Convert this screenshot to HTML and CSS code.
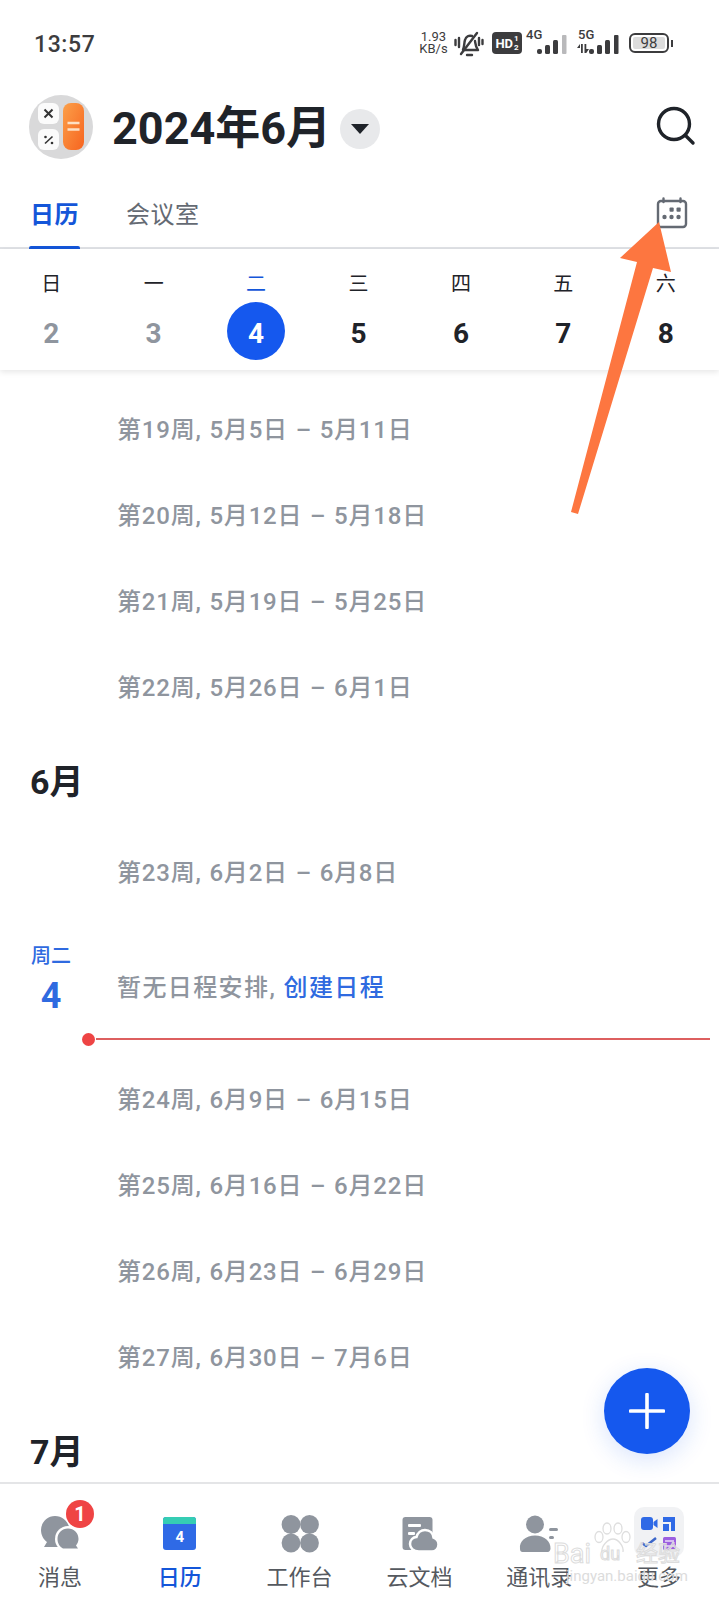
FILE: index.html
```html
<!DOCTYPE html>
<html lang="zh-CN">
<head>
    <meta charset="UTF-8">
    <meta name="viewport" content="width=device-width, initial-scale=1.0">
    <title>日历</title>
    <link rel="stylesheet" href="styles.css">
</head>
<body>
<div class="screen">

    <div class="status-bar">
        <span class="time">13:57</span>
        <div class="status-icons">
            <span class="speed">1.93<br>KB/s</span>
            <svg class="ic-bell" width="30" height="27" viewBox="0 0 30 27" fill="none" stroke="#3c3c3e" stroke-width="2.4" stroke-linecap="round" stroke-linejoin="round">
                <path d="M9 19.500 C10.500 17 10 13 11 10 C12 6.500 15 5 18 6 M21 11 C21.500 14 21.500 17 24 20 L9 20"/>
                <path d="M7 24 L23 3"/>
                <path d="M13 25 L18 25"/>
                <path d="M1.500 10 V15 M5 8 V17 M25 8 V15 M28.500 10 V14"/>
            </svg>
            <span class="hd">HD<span class="hd-sub">1<br>2</span></span>
            <div class="signal">
                <span class="signal-tag">4G</span>
                <svg width="32" height="20" viewBox="0 0 32 20" fill="#3c3c3e">
                    <rect x="1" y="14" width="5" height="5" rx="2"/>
                    <rect x="9" y="10" width="5" height="9" rx="1.500"/>
                    <rect x="17" y="5" width="5" height="14" rx="1.500"/>
                    <rect x="26" y="0" width="4.500" height="19" rx="1" fill="#b9b9bb"/>
                </svg>
            </div>
            <div class="signal signal-5g">
                <span class="signal-tag">5G</span>
                <svg width="44" height="20" viewBox="0 0 44 20" fill="#3c3c3e">
                    <path d="M4 13 L1 13 L4 9 Z M5 9 H6.800 V18 H5 Z M8.500 9 H10.300 V18 H8.500 Z M10.300 14 H13 L10.300 18 Z"/>
                    <rect x="13" y="14" width="5" height="5" rx="2"/>
                    <rect x="21" y="10" width="5" height="9" rx="1.500"/>
                    <rect x="29" y="5" width="5" height="14" rx="1.500"/>
                    <rect x="38" y="0" width="4.500" height="19" rx="1"/>
                </svg>
            </div>
            <div class="battery">
                <span class="battery-body"><span class="battery-level">98</span></span>
                <span class="battery-nub"></span>
            </div>
        </div>
    </div>

    <header class="top-bar">
        <svg class="avatar" width="64" height="64" viewBox="0 0 64 64">
            <defs>
                <linearGradient id="orange" x1="0" y1="0" x2="1" y2="1">
                    <stop offset="0" stop-color="#fba04a"/>
                    <stop offset="1" stop-color="#f7641f"/>
                </linearGradient>
            </defs>
            <circle cx="32" cy="32" r="32" fill="#d9d9da"/>
            <rect x="9" y="8" width="21" height="21" rx="6" fill="#fbfbfb"/>
            <rect x="9" y="34" width="21" height="21" rx="6" fill="#fbfbfb"/>
            <rect x="34" y="8" width="21" height="47" rx="8" fill="url(#orange)"/>
            <path d="M15.500 14.500 L23.500 22.500 M23.500 14.500 L15.500 22.500" stroke="#333" stroke-width="2"/>
            <path d="M16 48.500 L23.500 41.500" stroke="#333" stroke-width="1.600"/>
            <circle cx="16.500" cy="42" r="1.300" fill="#333"/>
            <circle cx="23" cy="48" r="1.300" fill="#333"/>
            <path d="M38.500 28 H50.500 M38.500 34.500 H50.500" stroke="#fde0c4" stroke-width="2.600"/>
        </svg>
        <h1 class="title">2024年6月</h1>
        <span class="caret-btn"><span class="caret"></span></span>
        <svg class="search" width="40" height="40" viewBox="0 0 40 40" fill="none" stroke="#1f2329" stroke-width="3.400" stroke-linecap="round">
            <circle cx="18" cy="18" r="15.500"/>
            <path d="M29.500 29.500 L37 37"/>
        </svg>
    </header>

    <nav class="tabs">
        <a class="tab tab-active">日历</a>
        <a class="tab">会议室</a>
        <svg class="tab-cal" width="32" height="32" viewBox="0 0 32 32">
            <rect x="2" y="4" width="28" height="26" rx="3" fill="none" stroke="#646a73" stroke-width="2.400"/>
            <path d="M7.500 1.500 V5 M24.500 1.500 V5" stroke="#646a73" stroke-width="2.400" stroke-linecap="round"/>
            <g fill="#646a73">
                <rect x="13.500" y="10.500" width="4.200" height="4.200" rx="1"/>
                <rect x="20.500" y="10.500" width="4.200" height="4.200" rx="1"/>
                <circle cx="8.500" cy="20" r="2.200"/>
                <circle cx="15.500" cy="20" r="2.200"/>
                <circle cx="22.500" cy="20" r="2.200"/>
            </g>
        </svg>
    </nav>

    <div class="week">
        <div class="day day-past"><span class="day-name">日</span><span class="day-num">2</span></div>
        <div class="day day-past"><span class="day-name">一</span><span class="day-num">3</span></div>
        <div class="day day-today"><span class="day-name">二</span><span class="day-num">4</span></div>
        <div class="day"><span class="day-name">三</span><span class="day-num">5</span></div>
        <div class="day"><span class="day-name">四</span><span class="day-num">6</span></div>
        <div class="day"><span class="day-name">五</span><span class="day-num">7</span></div>
        <div class="day"><span class="day-name">六</span><span class="day-num">8</span></div>
    </div>

    <main class="agenda">
        <div class="week-row">第19周, 5月5日 – 5月11日</div>
        <div class="week-row">第20周, 5月12日 – 5月18日</div>
        <div class="week-row">第21周, 5月19日 – 5月25日</div>
        <div class="week-row">第22周, 5月26日 – 6月1日</div>
        <h2 class="month">6月</h2>
        <div class="week-row">第23周, 6月2日 – 6月8日</div>
        <div class="today-row">
            <div class="today-date">
                <span class="today-name">周二</span>
                <span class="today-num">4</span>
            </div>
            <p class="today-text">暂无日程安排, <a class="create-link">创建日程</a></p>
        </div>
        <div class="now-line"><span class="now-dot"></span><span class="now-rule"></span></div>
        <div class="week-row">第24周, 6月9日 – 6月15日</div>
        <div class="week-row">第25周, 6月16日 – 6月22日</div>
        <div class="week-row">第26周, 6月23日 – 6月29日</div>
        <div class="week-row">第27周, 6月30日 – 7月6日</div>
        <h2 class="month">7月</h2>
    </main>

    <footer class="tabbar">
        <div class="tabbar-item">
            <svg class="tabbar-icon" width="60" height="56" viewBox="0 0 60 56">
                <path d="M25 10 C16.500 10 11 17 11 24 C11 29 13.500 33.500 17 36 L14 41 H30 C36 39 39.500 32 39.500 24 C39.500 17 33.500 10 25 10 Z" fill="#8f959e"/>
                <circle cx="38" cy="33" r="13" fill="#fff"/>
                <path d="M38 22.500 C32 22.500 27.500 27 27.500 33 C27.500 37.500 30 41 33 42.500 H48 L46 39.500 C47.500 37.500 48.500 35.500 48.500 33 C48.500 27 44 22.500 38 22.500 Z" fill="#8f959e"/>
            </svg>
            <span class="badge">1</span>
            <span class="tabbar-label">消息</span>
        </div>
        <div class="tabbar-item tabbar-active">
            <div class="cal-icon"><span class="cal-top"></span><span class="cal-num">4</span></div>
            <span class="tabbar-label">日历</span>
        </div>
        <div class="tabbar-item">
            <svg class="tabbar-icon" width="60" height="56" viewBox="0 0 60 56" fill="#8f959e">
                <circle cx="21" cy="18.500" r="9.400"/>
                <circle cx="39.500" cy="18.500" r="9.400"/>
                <circle cx="21" cy="37" r="9.400"/>
                <circle cx="39.500" cy="37" r="9.400"/>
            </svg>
            <span class="tabbar-label">工作台</span>
        </div>
        <div class="tabbar-item">
            <svg class="tabbar-icon" width="60" height="56" viewBox="0 0 60 56">
                <rect x="13.500" y="11" width="30" height="33" rx="3" fill="#8f959e"/>
                <rect x="19" y="18" width="13" height="3" rx="1" fill="#fff"/>
                <rect x="19" y="26" width="7" height="3" rx="1" fill="#fff"/>
                <path d="M30 45.500 C24 45.500 21 41.500 21 38 C21 34 24 31 27.500 31 C28.500 27 32 24 36 24 C41 24 44 27.500 44.500 31.500 C47.500 32.500 49.500 35 49.500 38.500 C49.500 42.500 46.500 45.500 43 45.500 Z" fill="#8f959e" stroke="#fff" stroke-width="2.500"/>
            </svg>
            <span class="tabbar-label">云文档</span>
        </div>
        <div class="tabbar-item">
            <svg class="tabbar-icon" width="60" height="56" viewBox="0 0 60 56" fill="#8f959e">
                <circle cx="26" cy="18.500" r="9"/>
                <path d="M11 43 C10 35 17 29.500 26 29.500 C35 29.500 42 35 41.500 43 C41 45 40 46 39 46 H13.500 C12 46 11 45 11 43 Z"/>
                <rect x="40" y="22" width="9" height="3" rx="1.500"/>
                <rect x="40" y="30" width="5" height="3" rx="1.500"/>
            </svg>
            <span class="tabbar-label">通讯录</span>
        </div>
        <div class="tabbar-item">
            <div class="more-icon">
                <svg width="50" height="50" viewBox="0 0 50 50">
                    <rect x="7" y="10" width="12" height="13" rx="3" fill="#2f6ae6"/>
                    <path d="M19.500 15 L23.500 12 V21 L19.500 18 Z" fill="#2f6ae6"/>
                    <path d="M29 10 H41 V24 H37 V15 H29 Z M29 17 H35 V24 H29 Z" fill="#2f6ae6"/>
                    <path d="M8 36 L12 39 L22 31" fill="none" stroke="#3b66c9" stroke-width="2.500"/>
                    <rect x="29" y="30" width="13" height="13" rx="1.500" fill="#9b5fe0"/>
                    <path d="M31 34 H40 M31 39 H40" stroke="#eadcf7" stroke-width="1.600"/>
                </svg>
            </div>
            <span class="tabbar-label">更多</span>
        </div>
    </footer>

    <button class="fab" aria-label="新建">
        <svg width="36" height="36" viewBox="0 0 36 36" stroke="#fff" stroke-width="3.600" stroke-linecap="round">
            <path d="M18 1.500 V34.500 M1.500 18 H34.500"/>
        </svg>
    </button>

    <svg class="arrow" width="719" height="1600" viewBox="0 0 719 1600">
        <polygon points="571,512 578,514 653,268 671,272 659,222 620,258 637,262" fill="#fd7640"/>
    </svg>

    <div class="watermark">
        <svg class="paw" width="40" height="32" viewBox="0 0 40 32" fill="none" stroke="#dedede" stroke-width="1.300">
            <ellipse cx="6" cy="15" rx="4" ry="5.500"/>
            <ellipse cx="14" cy="6.500" rx="4" ry="5.500"/>
            <ellipse cx="25" cy="6.500" rx="4" ry="5.500"/>
            <ellipse cx="33" cy="15" rx="4" ry="5.500"/>
            <path d="M9 30 C8 24 15 17 20 17 C25 17 31 24 30 30"/>
        </svg>
        <div class="wm-logo">
            <span class="wm-bai">Bai</span>
            <span class="wm-du">du</span>
            <span class="wm-cn">经验</span>
        </div>
        <span class="wm-url">jingyan.baidu.com</span>
    </div>

</div>
</body>
</html>
```

FILE: styles.css
```css
* {
    box-sizing: border-box;
}

html, body {
    margin: 0;
    padding: 0;
}

body {
    font-family: Roboto, "Noto Sans CJK SC", sans-serif;
    background-color: #fff;
    color: #1f2329;
}

.screen {
    position: relative;
    width: 719px;
    height: 1600px;
    display: flex;
    flex-direction: column;
    overflow: hidden;
    background-color: #fff;
}

/* status bar */

.status-bar {
    height: 87px;
    flex: none;
    display: flex;
    justify-content: space-between;
    align-items: center;
    padding: 0 46px 0 34px;
    color: #3c3c3e;
}

.time {
    font-size: 23px;
    font-weight: 500;
    letter-spacing: 0.6px;
    margin-top: 1px;
}

.status-icons {
    display: flex;
    align-items: center;
    margin-bottom: 1px;
}

.speed {
    font-size: 13px;
    line-height: 12px;
    text-align: center;
    width: 29px;
}

.ic-bell {
    margin-left: 6px;
}

.hd {
    margin-left: 8px;
    width: 30px;
    height: 22px;
    border-radius: 4px;
    background-color: #3c3c3e;
    color: #fff;
    display: flex;
    align-items: center;
    justify-content: center;
    font-size: 13px;
    font-weight: 700;
}

.hd-sub {
    font-size: 8px;
    line-height: 9px;
    margin-left: 1px;
}

.signal {
    position: relative;
    margin-left: 4px;
    padding-top: 3px;
    width: 42px;
    display: flex;
    justify-content: flex-end;
}

.signal-5g {
    margin-left: 8px;
    width: 44px;
}

.signal-tag {
    position: absolute;
    left: 0;
    top: -4px;
    font-size: 13px;
    line-height: 14px;
    font-weight: 500;
}

.signal-5g .signal-tag {
    left: 2px;
}

.battery {
    margin-left: 9px;
    display: flex;
    align-items: center;
}

.battery-body {
    width: 40px;
    height: 20px;
    border: 2px solid #3c3c3e;
    border-radius: 6px;
    padding: 2px;
    display: block;
}

.battery-level {
    display: block;
    height: 12px;
    background-color: #dcdcdc;
    border-radius: 2px;
    font-size: 15px;
    line-height: 12px;
    text-align: center;
}

.battery-nub {
    width: 2px;
    height: 7px;
    margin-left: 2px;
    background-color: #3c3c3e;
}

/* header */

.top-bar {
    height: 80px;
    flex: none;
    position: relative;
    display: flex;
    align-items: center;
    padding-left: 29px;
}

.title {
    margin: 4px 0 0 19px;
    font-size: 45px;
    font-weight: 700;
    line-height: 60px;
}

.caret-btn {
    width: 40px;
    height: 40px;
    margin: 3px 0 0 9px;
    border-radius: 50%;
    background-color: #e8e9eb;
    display: flex;
    align-items: center;
    justify-content: center;
}

.caret {
    width: 0;
    height: 0;
    border-left: 9px solid transparent;
    border-right: 9px solid transparent;
    border-top: 10px solid #1f2329;
}

.search {
    position: absolute;
    right: 23px;
    top: 19px;
}

.tabs {
    height: 82px;
    flex: none;
    display: flex;
    align-items: center;
    position: relative;
    border-bottom: 2px solid #e0e2e6;
    padding-left: 30px;
}

.tab {
    font-size: 24px;
    color: #646a73;
    line-height: 34px;
    margin-right: 47px;
    letter-spacing: 0.5px;
    position: relative;
    margin-top: 15px;
}

.tab-active {
    color: #1456d9;
    font-weight: 700;
}

.tab-active::after {
    content: "";
    position: absolute;
    left: -1px;
    right: -1px;
    bottom: -18px;
    height: 4px;
    border-radius: 2px 2px 0 0;
    background-color: #1456d9;
}

.tab-cal {
    position: absolute;
    right: 31px;
    top: 30px;
}

/* week strip */

.week {
    height: 121px;
    flex: none;
    display: grid;
    grid-template-columns: repeat(7, 1fr);
    padding-right: 2px;
    background-color: #fff;
    box-shadow: 0 2px 6px rgba(0, 0, 0, 0.1);
    position: relative;
}

.day {
    display: flex;
    flex-direction: column;
    align-items: center;
}

.day-name {
    margin-top: 22px;
    font-size: 20px;
    line-height: 26px;
}

.day-num {
    margin-top: 5px;
    padding-top: 4px;
    width: 58px;
    height: 58px;
    display: flex;
    align-items: center;
    justify-content: center;
    font-size: 28px;
    font-weight: 700;
}

.day-past .day-num {
    color: #8f959e;
}

.day-today .day-name {
    color: #1456d9;
}

.day-today .day-num {
    background-color: #1558ee;
    color: #fff;
    border-radius: 50%;
}

/* agenda list */

.agenda {
    flex: 1;
    min-height: 0;
    overflow: hidden;
    padding-top: 14px;
}

.week-row {
    height: 86px;
    display: flex;
    align-items: center;
    padding-left: 117px;
    font-size: 24px;
    font-weight: 500;
    letter-spacing: 0.8px;
    word-spacing: 1px;
    color: #8f959e;
}

.month {
    margin: 0;
    height: 99px;
    padding: 32px 0 0 30px;
    font-size: 34px;
    line-height: 44px;
    font-weight: 700;
}

.today-row {
    height: 113px;
    display: flex;
    align-items: flex-start;
    padding: 31px 0 0 29px;
}

.today-date {
    width: 44px;
    display: flex;
    flex-direction: column;
    align-items: center;
    color: #2f6ae0;
}

.today-name {
    font-size: 20px;
    line-height: 24px;
    font-weight: 500;
}

.today-num {
    margin-top: 8px;
    font-size: 36px;
    line-height: 40px;
    font-weight: 700;
}

.today-text {
    margin: 27px 0 0 44px;
    font-size: 24px;
    font-weight: 500;
    line-height: 34px;
    letter-spacing: 1.4px;
    color: #8f959e;
}

.create-link {
    color: #2f6ae0;
}

.now-line {
    height: 26px;
    margin-bottom: 2px;
    display: flex;
    align-items: center;
    padding: 0 9px 0 82px;
}

.now-dot {
    width: 13px;
    height: 13px;
    border-radius: 50%;
    background-color: #ee4444;
    flex: none;
}

.now-rule {
    flex: 1;
    height: 2px;
    margin-left: 1px;
    background-color: #dd5f5f;
}

/* bottom tabs */

.tabbar {
    height: 118px;
    flex: none;
    display: grid;
    grid-template-columns: repeat(6, 1fr);
    border-top: 2px solid #e4e5e7;
    background-color: #fff;
}

.tabbar-item {
    position: relative;
    display: flex;
    flex-direction: column;
    align-items: center;
}

.tabbar-icon {
    margin-top: 22px;
}

.tabbar-label {
    position: absolute;
    top: 78px;
    font-size: 22px;
    line-height: 32px;
    color: #55595f;
}

.tabbar-active .tabbar-label {
    color: #1456d9;
    font-weight: 500;
}

.badge {
    position: absolute;
    left: 66px;
    top: 16px;
    width: 28px;
    height: 28px;
    border-radius: 50%;
    background-color: #ef4444;
    color: #fff;
    font-size: 20px;
    font-weight: 700;
    display: flex;
    align-items: center;
    justify-content: center;
}

.cal-icon {
    margin-top: 33px;
    width: 33px;
    height: 33px;
    border-radius: 3px;
    overflow: hidden;
    background-color: #2f6ae6;
    display: flex;
    flex-direction: column;
    align-items: center;
}

.cal-top {
    width: 100%;
    height: 7px;
    background-color: #35cdb4;
    flex: none;
}

.cal-num {
    color: #fff;
    font-size: 15px;
    font-weight: 700;
    line-height: 26px;
}

.more-icon {
    margin-top: 23px;
    width: 50px;
    height: 50px;
    border-radius: 10px;
    background-color: #f1f2f4;
}

.more-icon svg {
    display: block;
}

/* floating things over the page */

.fab {
    position: absolute;
    right: 29px;
    bottom: 146px;
    width: 86px;
    height: 86px;
    padding: 0;
    border: none;
    border-radius: 50%;
    background-color: #1558ee;
    box-shadow: 0 6px 24px rgba(21, 88, 238, 0.16);
    display: flex;
    align-items: center;
    justify-content: center;
}

.arrow {
    position: absolute;
    left: 0;
    top: 0;
    pointer-events: none;
}

.watermark {
    position: absolute;
    left: 553px;
    top: 1522px;
    width: 130px;
    height: 70px;
    pointer-events: none;
}

.paw {
    position: absolute;
    left: 40px;
    top: 0;
}

.wm-logo {
    position: absolute;
    left: 0;
    top: 20px;
    display: flex;
    align-items: center;
    white-space: nowrap;
    line-height: 24px;
    color: rgba(255, 255, 255, 0.4);
    -webkit-text-stroke: 1px #dcdcdc;
}

.wm-bai {
    font-size: 27px;
}

.wm-du {
    margin-left: 2px;
    width: 34px;
    height: 22px;
    text-align: center;
    font-size: 18px;
    line-height: 21px;
}

.wm-cn {
    margin-left: 9px;
    font-size: 22px;
}

.wm-url {
    position: absolute;
    left: 13px;
    top: 45px;
    font-size: 15px;
    line-height: 18px;
    white-space: nowrap;
    color: #dcdcdc;
}
```
